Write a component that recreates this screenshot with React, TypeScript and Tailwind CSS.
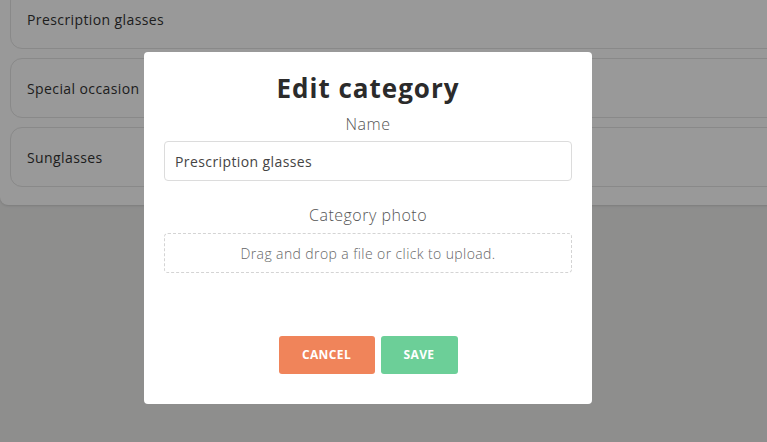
const font = { fontFamily: '"Open Sans", "Liberation Sans", sans-serif' }

const categories = ['Prescription glasses', 'Special occasion', 'Sunglasses']

export default function App() {
  return (
    <div className="relative h-[442px] w-[767px] overflow-hidden bg-[#ededec]" style={font}>
      {/* Category list (behind the modal) */}
      <div className="-mt-[21px] w-[820px] rounded-b-lg bg-white px-[10px] pt-[10px] pb-[18px] shadow-sm">
        <div className="flex flex-col gap-[9px]">
          {categories.map((c) => (
            <div
              key={c}
              className="flex h-[60px] items-center rounded-[12px] border border-[#e4e4e4] px-4 text-[14px] tracking-[0.4px] text-[#333]"
            >
              {c}
            </div>
          ))}
        </div>
      </div>

      {/* Overlay */}
      <div className="absolute inset-0 bg-black/40" />

      {/* Modal */}
      <div className="absolute left-[144px] top-[52px] flex h-[352px] w-[448px] flex-col items-center rounded-[4px] bg-white px-5 pt-[18px]">
        <h2 className="text-[26px] font-bold leading-[36px] tracking-[1px] text-[#2b2b2b]">Edit category</h2>
        <label className="mt-[8px] text-[16px] font-light leading-[20px] tracking-[0.5px] text-[#555]">Name</label>
        <input
          className="mt-[7px] h-[40px] w-full rounded-[4px] border border-[#dcdcdc] px-[10px] text-[14px] tracking-[0.4px] text-[#444] outline-none"
          defaultValue="Prescription glasses"
          style={font}
        />
        <label className="mt-[24px] text-[16px] font-light leading-[20px] tracking-[0.5px] text-[#555]">Category photo</label>
        <div className="mt-[8px] flex h-[40px] w-full items-center justify-center rounded-[4px] border border-dashed border-[#d4d4d4] text-[14px] font-light tracking-[0.4px] text-[#666]">
          Drag and drop a file or click to upload.
        </div>
        <div className="mt-[63px] flex gap-[6px]">
          <button className="h-[38px] w-[96px] rounded-[3px] bg-[#f0845a] text-[12px] font-bold tracking-[0.4px] text-white">
            CANCEL
          </button>
          <button className="h-[38px] w-[77px] rounded-[3px] bg-[#6ccf98] text-[12px] font-bold tracking-[0.4px] text-white">
            SAVE
          </button>
        </div>
      </div>
    </div>
  )
}
